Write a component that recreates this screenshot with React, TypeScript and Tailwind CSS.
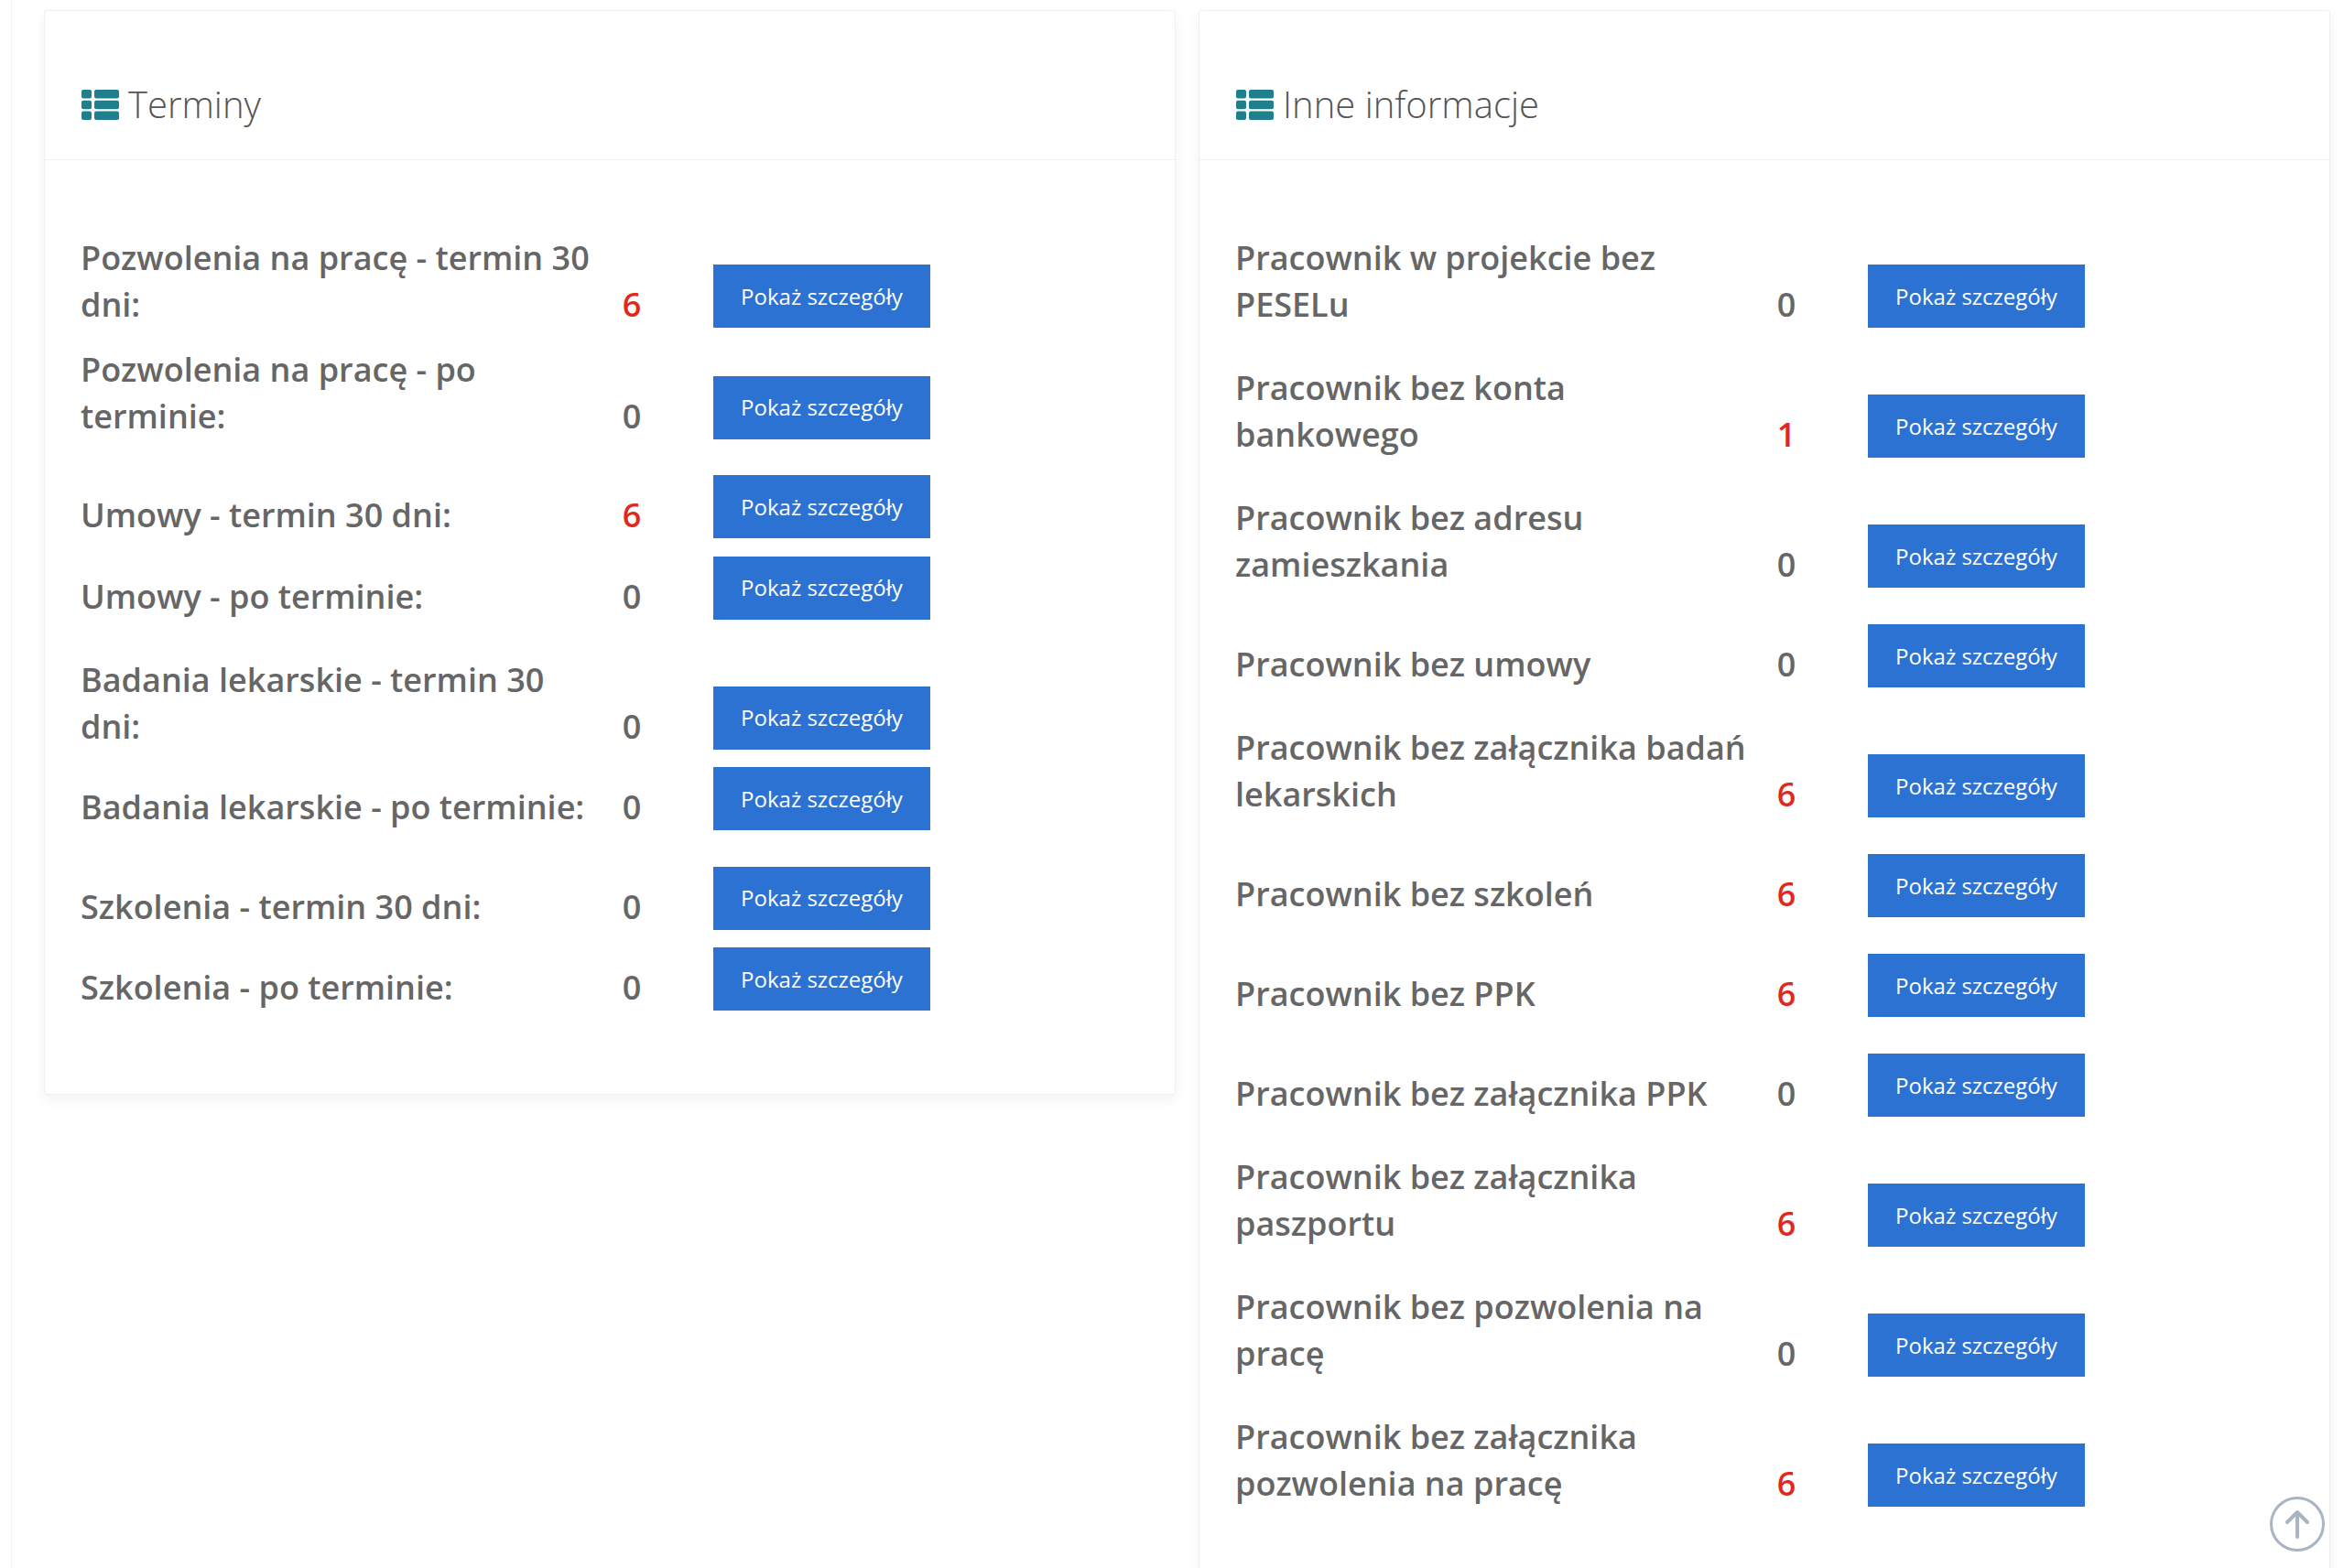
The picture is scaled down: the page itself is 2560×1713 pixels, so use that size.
import { ReactNode } from "react";

type Row = { label: string; value: number };

const termGroups: Row[][] = [
  [
    { label: "Pozwolenia na pracę - termin 30 dni:", value: 6 },
    { label: "Pozwolenia na pracę - po terminie:", value: 0 },
  ],
  [
    { label: "Umowy - termin 30 dni:", value: 6 },
    { label: "Umowy - po terminie:", value: 0 },
  ],
  [
    { label: "Badania lekarskie - termin 30 dni:", value: 0 },
    { label: "Badania lekarskie - po terminie:", value: 0 },
  ],
  [
    { label: "Szkolenia - termin 30 dni:", value: 0 },
    { label: "Szkolenia - po terminie:", value: 0 },
  ],
];

const otherRows: Row[] = [
  { label: "Pracownik w projekcie bez PESELu", value: 0 },
  { label: "Pracownik bez konta bankowego", value: 1 },
  { label: "Pracownik bez adresu zamieszkania", value: 0 },
  { label: "Pracownik bez umowy", value: 0 },
  { label: "Pracownik bez załącznika badań lekarskich", value: 6 },
  { label: "Pracownik bez szkoleń", value: 6 },
  { label: "Pracownik bez PPK", value: 6 },
  { label: "Pracownik bez załącznika PPK", value: 0 },
  { label: "Pracownik bez załącznika paszportu", value: 6 },
  { label: "Pracownik bez pozwolenia na pracę", value: 0 },
  { label: "Pracownik bez załącznika pozwolenia na pracę", value: 6 },
];

function ListIcon() {
  return (
    <svg width="41" height="33" viewBox="0 0 41 33" className="shrink-0" fill="#1f7f8c">
      <rect x="0" y="0" width="11" height="9.5" rx="2" />
      <rect x="14" y="0" width="27" height="9.5" rx="2" />
      <rect x="0" y="11.75" width="11" height="9.5" rx="2" />
      <rect x="14" y="11.75" width="27" height="9.5" rx="2" />
      <rect x="0" y="23.5" width="11" height="9.5" rx="2" />
      <rect x="14" y="23.5" width="27" height="9.5" rx="2" />
    </svg>
  );
}

function StatRow({ label, value }: Row) {
  return (
    <div className="flex items-end">
      <div className="w-[560px] text-[36px] leading-[51px] font-semibold text-[#666666]">{label}</div>
      <div
        className={`w-[84px] text-center text-[36px] leading-[51px] font-semibold ${
          value > 0 ? "text-[#e0281c]" : "text-[#666666]"
        }`}
      >
        {value}
      </div>
      <button className="ml-[47px] h-[69px] w-[237px] bg-[#2c72d3] text-[24px] text-white">Pokaż szczegóły</button>
    </div>
  );
}

function Card({ title, className, children }: { title: string; className: string; children: ReactNode }) {
  return (
    <section className={`rounded-[3px] border border-[#efefef] bg-white shadow-[0_6px_14px_rgba(0,0,0,0.05)] ${className}`}>
      <header className="flex h-[163px] items-center gap-[10px] border-b border-[#efefef] pt-[42px] pl-[40px]">
        <ListIcon />
        <h2 className="text-[40px] font-light text-[#555555]">{title}</h2>
      </header>
      <div className="pt-[81px] pl-[39px]">{children}</div>
    </section>
  );
}

export default function App() {
  return (
    <div
      className="relative h-[1713px] overflow-hidden bg-white"
      style={{ fontFamily: '"Open Sans", "Liberation Sans", sans-serif' }}
    >
      <div className="ml-[12px] flex h-full items-start gap-[25px] border-l border-[#f2f2f2] pt-[11px] pl-[35px]">
        <Card title="Terminy" className="w-[1236px] pb-[91px]">
          <div className="flex flex-col gap-[39.75px]">
            {termGroups.map((group, i) => (
              <div key={i} className="flex flex-col gap-[19.5px]">
                {group.map((row) => (
                  <StatRow key={row.label} {...row} />
                ))}
              </div>
            ))}
          </div>
        </Card>
        <Card title="Inne informacje" className="w-[1236px] pb-[160px]">
          <div className="flex flex-col gap-[40px]">
            {otherRows.map((row) => (
              <StatRow key={row.label} {...row} />
            ))}
          </div>
        </Card>
      </div>
      <div className="absolute top-[1635px] left-[2479px] flex h-[60px] w-[60px] items-center justify-center rounded-full border-[3px] border-[#a9b5c3] bg-white">
        <svg width="30" height="34" viewBox="0 0 30 34" fill="none" stroke="#a9b5c3" strokeWidth="4" strokeLinecap="round" strokeLinejoin="round">
          <path d="M15 4v27M4 15L15 4l11 11" />
        </svg>
      </div>
    </div>
  );
}
